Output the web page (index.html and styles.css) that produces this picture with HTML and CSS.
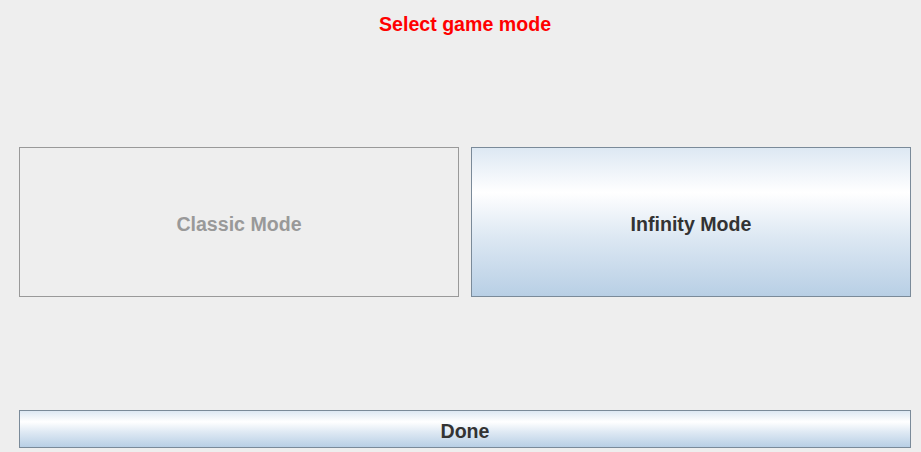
FILE: index.html
```html
<!DOCTYPE html>
<html>
<head>
<meta charset="utf-8">
<link rel="stylesheet" href="styles.css">
</head>
<body>
<div class="page">
  <div class="title">Select game mode</div>
  <div class="modes">
    <button class="btn mode disabled" disabled>Classic Mode</button>
    <button class="btn mode ocean">Infinity Mode</button>
  </div>
  <button class="btn done ocean">Done</button>
</div>
</body>
</html>
```
FILE: styles.css
```css
html, body {
  margin: 0;
  padding: 0;
  background: #eeeeee;
}
.page {
  width: 921px;
  height: 452px;
  box-sizing: border-box;
  padding: 12px 10px 0 19px;
  display: flex;
  flex-direction: column;
  font-family: "Liberation Sans", Arial, sans-serif;
}
.title {
  height: 24px;
  line-height: 24px;
  text-align: center;
  color: #ff0000;
  font-weight: bold;
  font-size: 19.6px;
}
.modes {
  margin-top: 111px;
  display: flex;
  gap: 12px;
  height: 150px;
}
.btn {
  margin: 0;
  padding: 4px 0 0 0;
  font-family: "Liberation Sans", Arial, sans-serif;
  font-weight: bold;
  font-size: 19.6px;
  color: #333333;
  box-sizing: border-box;
  display: flex;
  align-items: center;
  justify-content: center;
}
.mode {
  width: 440px;
  height: 150px;
}
.disabled {
  background: #eeeeee;
  border: 1px solid #999999;
  color: #999999;
}
.ocean {
  border: 1px solid #7a8a99;
  background: linear-gradient(to bottom, #dde8f3 0%, #ffffff 30%, #dde8f3 60%, #b8cfe5 100%);
}
.done {
  margin-top: 113px;
  height: 38px;
  width: 892px;
}
```
